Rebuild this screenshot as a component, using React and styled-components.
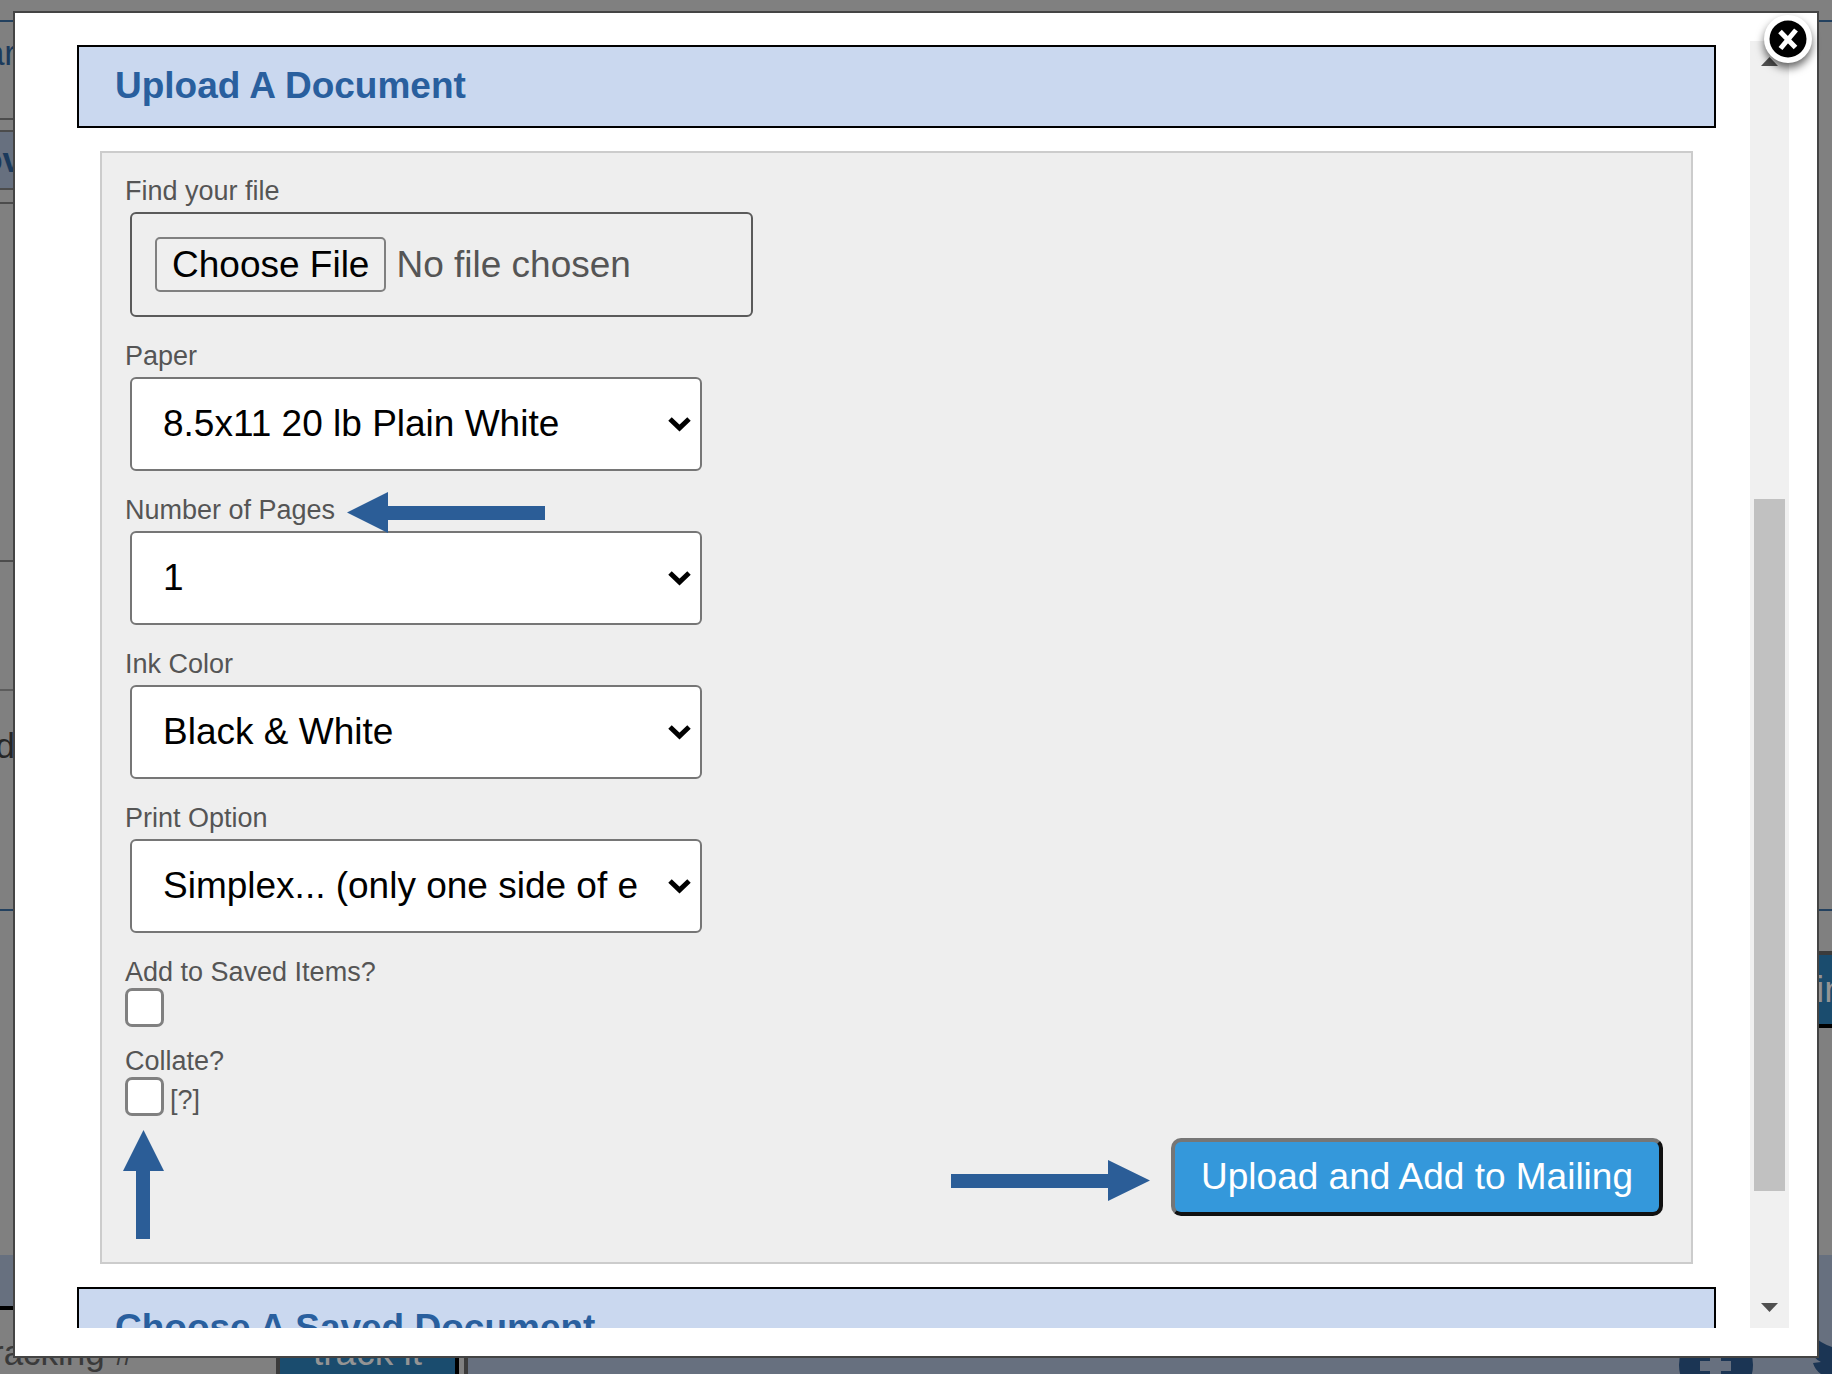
import React, { useState } from 'react';
import styled, { createGlobalStyle } from 'styled-components';

const GlobalStyle = createGlobalStyle`
    * {
        box-sizing: border-box;
    }
    body {
        margin: 0;
        overflow: hidden;
        background-color: #808080;
        font-family: 'Liberation Sans', Arial, sans-serif;
    }
`;

/* dimmed page behind the dialog */

const Page = styled.div`
    display: flex;
    flex-direction: column;
    height: 100vh;
    overflow: hidden;
    font-size: 35px;
    line-height: 40px;
`;

const PageRow = styled.div`
    display: flex;
    align-items: ${(props) => (props.$top ? 'flex-start' : 'center')};
    justify-content: space-between;
    flex: none;
    width: ${(props) => (props.$half ? '50%' : '100%')};
    height: ${(props) => props.$height}px;
    padding-top: ${(props) => props.$top || 0}px;
    border-bottom: 2px solid ${(props) => props.$line || 'transparent'};
    background-color: ${(props) => props.$fill || 'transparent'};
`;

const CutText = styled.span`
    display: flex;
    justify-content: flex-end;
    width: ${(props) => props.$width}px;
    overflow: hidden;
    white-space: nowrap;
    color: ${(props) => props.color};
    font-weight: ${(props) => props.$weight || 400};
`;

const PageButton = styled.button`
    width: ${(props) => props.$width}px;
    height: 77px;
    margin-left: auto;
    padding: 0 0 0 ${(props) => props.$indent || 0}px;
    overflow: hidden;
    border: 4px solid;
    border-color: #3b3b3b #000 #000 #3b3b3b;
    border-right-width: ${(props) => (props.$indent ? 0 : 4)}px;
    background-color: #1a4c6e;
    color: #949494;
    font-family: inherit;
    font-size: 37px;
    line-height: 42px;
    text-align: ${(props) => (props.$indent ? 'left' : 'center')};
    white-space: nowrap;
`;

const PageFooter = styled.div`
    display: flex;
    justify-content: space-between;
    flex: 1;
    background-color: #67707f;
`;

const Tracking = styled.div`
    width: 468px;
    padding-top: 51px;
    border-right: 4px solid #3b3b3b;
`;

const TrackingRow = styled.div`
    display: flex;
    align-items: center;
    height: 90px;
    padding-right: 5px;
    border-top: 4px solid #000;
    background-color: #808080;
`;

const Social = styled.div`
    display: flex;
    gap: 58px;
    padding-top: 73px;
`;

/* dialog */

const Dialog = styled.div`
    position: fixed;
    inset: 11px 13px 16px;
    display: flex;
    padding: 28px;
    border: 2px solid #444;
    background-color: #fff;
`;

const Content = styled.div`
    flex: 1;
    min-width: 0;
    padding: 4px 34px 0;
    overflow: hidden;
`;

const Title = styled.h2`
    margin: 0;
    padding: 17px 36px 19px;
    border: 2px solid #000;
    background-color: #cad8ef;
    color: #295f9e;
    font-size: 37px;
    line-height: 43px;
`;

const Panel = styled.form`
    display: flex;
    flex-direction: column;
    align-items: flex-start;
    gap: 19px;
    margin: 23px;
    padding: 23px 28px 46px 23px;
    border: 2px solid #ccc;
    background-color: #eee;
    color: #555;
`;

const Field = styled.div`
    position: relative;
    max-width: 100%;
`;

const Label = styled.label`
    display: block;
    font-size: 27px;
    line-height: 31px;
`;

const FileInput = styled.input`
    display: block;
    width: 623px;
    max-width: 100%;
    height: 105px;
    margin: 5px;
    padding: 23px;
    border: 2px solid #5a5a5a;
    border-radius: 6px;
    color: #555;
    font-family: inherit;
    font-size: 37px;
    line-height: 43px;

    &::file-selector-button {
        height: 55px;
        margin: 0 10px 0 0;
        padding: 0 15px;
        border: 2px solid #808080;
        border-radius: 5px;
        background-color: #efefef;
        color: #000;
        font-family: inherit;
        font-size: 37px;
    }
`;

const SelectBox = styled.div`
    position: relative;
    width: 572px;
    max-width: 100%;
    margin: 5px;

    svg {
        position: absolute;
        right: 9px;
        top: 38px;
        pointer-events: none;
    }
`;

const Select = styled.select`
    display: block;
    width: 100%;
    height: 94px;
    padding: 0 61px 2px 31px;
    border: 2px solid #767676;
    border-radius: 6px;
    appearance: none;
    background-color: #fff;
    color: #000;
    font-family: inherit;
    font-size: 37px;
`;

const CheckLine = styled.div`
    display: flex;
    align-items: flex-end;
    gap: 6px;
    font-size: 27px;
    line-height: 31px;
`;

const Checkbox = styled.input`
    width: 39px;
    height: 39px;
    margin: 0;
    border: 3px solid #808080;
    border-radius: 7px;
    appearance: none;
    background-color: #fff;

    &:checked {
        background-color: #3498db;
    }
`;

const Actions = styled.div`
    position: relative;
    align-self: flex-end;
    margin-top: 3px;
`;

const SubmitButton = styled.button`
    display: block;
    height: 78px;
    padding: 0 26px 2px;
    border: 4px solid;
    border-color: #767676 #111 #111 #767676;
    border-radius: 10px;
    background-color: #3498db;
    color: #fff;
    font-family: inherit;
    font-size: 37px;
    line-height: 43px;
`;

// callout arrows lie over the form
const Callout = styled.svg`
    position: absolute;
    left: ${(props) => props.$left}px;
    top: ${(props) => props.$top}px;
    z-index: 1;
    fill: #2b5d97;
`;

const Scrollbar = styled.div`
    display: flex;
    flex-direction: column;
    align-items: center;
    width: 39px;
    background-color: #f0f0f0;
`;

const ScrollArrow = styled.svg`
    flex: none;
    fill: #505050;
`;

const ScrollSpace = styled.div`
    flex: ${(props) => props.$size} 0 0;
`;

const ScrollThumb = styled.div`
    flex: 692 0 0;
    width: 31px;
    background-color: #c1c1c1;
`;

const CloseButton = styled.button`
    position: absolute;
    top: -4px;
    right: -4px;
    width: 66px;
    height: 66px;
    padding: 0;
    border: 0;
    background: none;

    svg {
        display: block;
        overflow: visible;
        filter: drop-shadow(0 5px 4px rgba(0, 0, 0, 0.6));
    }
`;

const selects = [
    {
        id: 'paper',
        label: 'Paper',
        options: ['8.5x11 20 lb Plain White'],
    },
    { id: 'pages', label: 'Number of Pages', options: ['1', '2', '3', '4'] },
    { id: 'ink', label: 'Ink Color', options: ['Black & White', 'Color'] },
    {
        id: 'print',
        label: 'Print Option',
        options: ['Simplex... (only one side of each sheet)', 'Duplex'],
    },
];

const SelectField = ({ id, label, options, children }) => {
    const [value, setValue] = useState(options[0]);

    return (
        <Field>
            <Label htmlFor={id}>{label}</Label>
            <SelectBox>
                <Select
                    id={id}
                    value={value}
                    onChange={(e) => setValue(e.target.value)}
                >
                    {options.map((option) => (
                        <option key={option}>{option}</option>
                    ))}
                </Select>
                <svg width='26' height='18' viewBox='0 0 26 18'>
                    <path
                        d='M3 4 L12.5 13 L22 4'
                        fill='none'
                        stroke='#000'
                        strokeWidth='5'
                    />
                </svg>
            </SelectBox>
            {children}
        </Field>
    );
};

const Background = () => (
    <Page aria-hidden='true'>
        <PageRow $height={22} $line='#23415f' />
        <PageRow $half $height={98} $line='#4c4c4c' $top={11}>
            <CutText color='#1b3a5c' $width={16}>
                ar
            </CutText>
        </PageRow>
        <PageRow $half $height={12} $line='#4c4c4c' />
        <PageRow $half $height={58} $line='#4c4c4c' $fill='#67707f'>
            <CutText color='#1b3a5c' $width={22} $weight={700}>
                ov
            </CutText>
        </PageRow>
        <PageRow $half $height={14} $line='#4c4c4c' />
        <PageRow $half $height={358} $line='#4c4c4c' />
        <PageRow $half $height={129} $line='#5c5c5c' />
        <PageRow $height={220} $line='#23415f' $top={35}>
            <CutText color='#262626' $width={15}>
                d
            </CutText>
        </PageRow>
        <PageRow $height={344} $top={40}>
            <PageButton tabIndex={-1} $width={24} $indent={4}>
                in
            </PageButton>
        </PageRow>
        <PageFooter>
            <Tracking>
                <TrackingRow>
                    <CutText color='#3a3a3a' $width={134}>
                        Tracking #
                    </CutText>
                    <PageButton tabIndex={-1} $width={183}>
                        track it
                    </PageButton>
                </TrackingRow>
            </Tracking>
            <Social>
                <svg width='74' height='74' viewBox='0 0 74 74'>
                    <circle cx='37' cy='37' r='37' fill='#1b3554' />
                    <path
                        d='M31 70 V43 H21 V33 H31 V24 Q31 12 44 12 H52 V22 H46 Q42 22 42 26 V33 H52 V43 H42 V70 Z'
                        fill='#67707f'
                    />
                </svg>
                <svg width='21' height='74' viewBox='0 0 21 74'>
                    <path
                        d='M0 6 Q9 15 21 19 V46 H10 Q4 42 2 35 L10 34 Q1 30 1 20 L7 22 Q-2 14 0 6 Z'
                        fill='#1b3554'
                    />
                </svg>
            </Social>
        </PageFooter>
    </Page>
);

const App = () => {
    return (
        <>
            <GlobalStyle />
            <Background />
            <Dialog role='dialog' aria-label='Upload A Document'>
                <Content>
                    <Title>Upload A Document</Title>
                    <Panel onSubmit={(e) => e.preventDefault()}>
                        <Field>
                            <Label htmlFor='file'>Find your file</Label>
                            <FileInput id='file' type='file' />
                        </Field>
                        {selects.map((item) => (
                            <SelectField key={item.id} {...item}>
                                {item.id === 'pages' && (
                                    <Callout
                                        $left={222}
                                        $top={-3}
                                        width='198'
                                        height='41'
                                        viewBox='0 0 198 41'
                                    >
                                        <path d='M0 20.5 L41 0 V14 H198 V28 H41 V41 Z' />
                                    </Callout>
                                )}
                            </SelectField>
                        ))}
                        <Field>
                            <Label htmlFor='saved'>Add to Saved Items?</Label>
                            <CheckLine>
                                <Checkbox id='saved' type='checkbox' />
                            </CheckLine>
                        </Field>
                        <Field>
                            <Label htmlFor='collate'>Collate?</Label>
                            <CheckLine>
                                <Checkbox id='collate' type='checkbox' />
                                <span>[?]</span>
                            </CheckLine>
                            <Callout
                                $left={-2}
                                $top={84}
                                width='41'
                                height='109'
                                viewBox='0 0 41 109'
                            >
                                <path d='M20.5 0 L41 41 H27 V109 H13 V41 H0 Z' />
                            </Callout>
                        </Field>
                        <Actions>
                            <Callout
                                $left={-220}
                                $top={22}
                                width='199'
                                height='41'
                                viewBox='0 0 199 41'
                            >
                                <path d='M199 20.5 L157 0 V14 H0 V28 H157 V41 Z' />
                            </Callout>
                            <SubmitButton type='submit'>
                                Upload and Add to Mailing
                            </SubmitButton>
                        </Actions>
                    </Panel>
                    <Title>Choose A Saved Document</Title>
                </Content>
                <Scrollbar>
                    <ScrollArrow width='39' height='39' viewBox='0 0 39 39'>
                        <path d='M11 25 L19.5 16 L28 25 Z' />
                    </ScrollArrow>
                    <ScrollSpace $size={419} />
                    <ScrollThumb />
                    <ScrollSpace $size={98} />
                    <ScrollArrow width='39' height='39' viewBox='0 0 39 39'>
                        <path d='M11 14 L19.5 23 L28 14 Z' />
                    </ScrollArrow>
                </Scrollbar>
                <CloseButton aria-label='Close'>
                    <svg width='66' height='66' viewBox='0 0 66 66'>
                        <circle cx='33' cy='30' r='24' fill='#fff' />
                        <circle cx='33' cy='30' r='18.5' fill='#000' />
                        <path
                            d='M25 22.5 L40.5 38.5 M41 21 L25.5 39.5'
                            stroke='#fff'
                            strokeWidth='5'
                        />
                    </svg>
                </CloseButton>
            </Dialog>
        </>
    );
};

export default App;
